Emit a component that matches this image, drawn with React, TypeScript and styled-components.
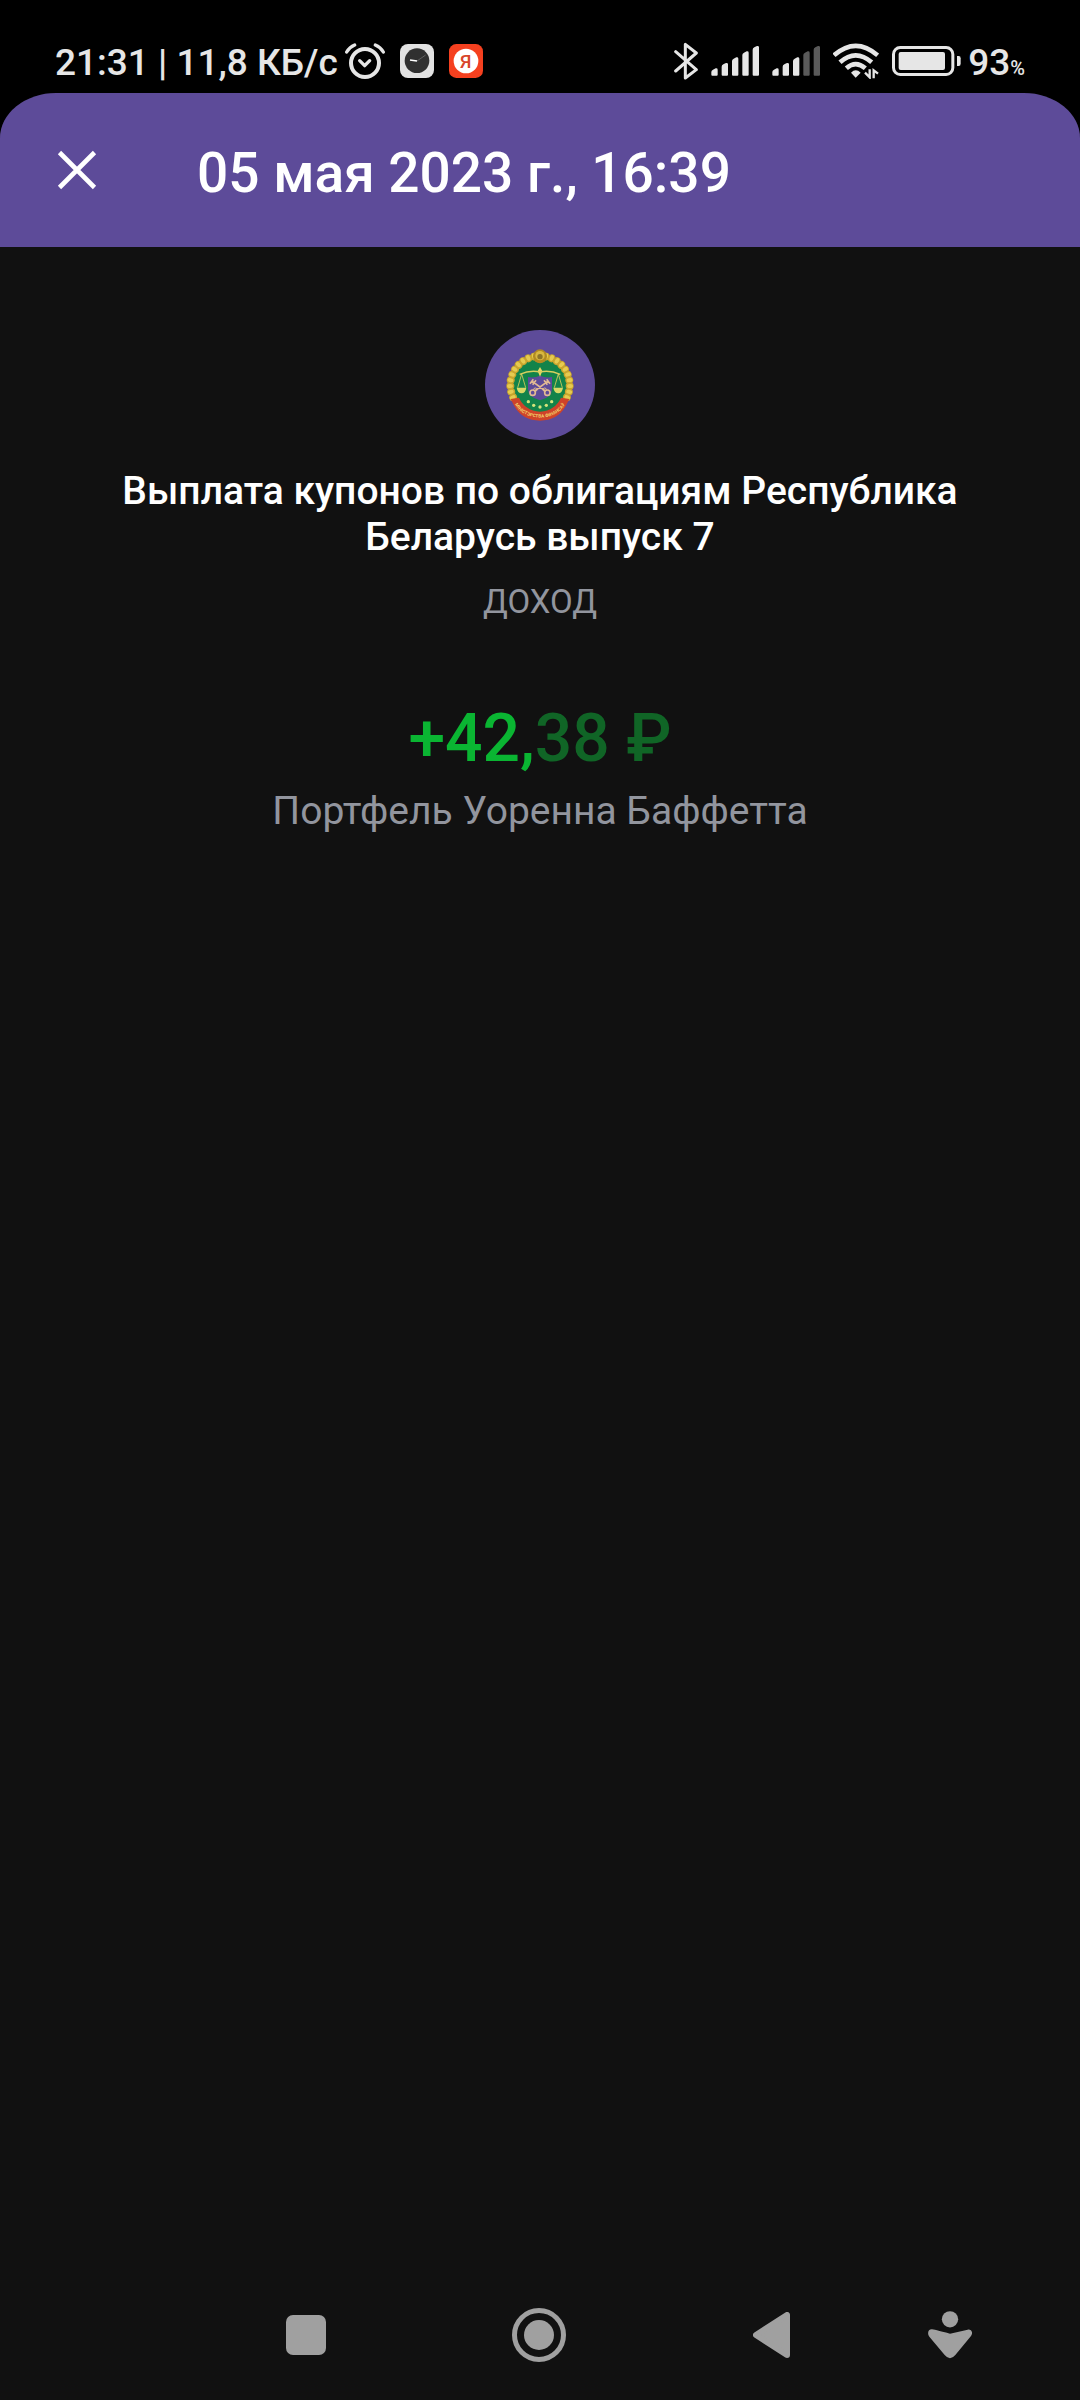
import React from "react";
import styled, { createGlobalStyle } from "styled-components";

const LIGHT = "#e6e6e6";
const GREY = "#a0a0a0";

export default function App() {
  return (
    <Page>
      <GlobalStyle />
      <StatusBar />
      <Screen>
        <Header>
          <IconButton aria-label="Закрыть">
            <svg width="40" height="40" viewBox="0 0 40 40">
              <path d="M2.5 2.5 37.5 37.5M37.5 2.5 2.5 37.5" stroke="#fff" strokeWidth="4.6" />
            </svg>
          </IconButton>
          <HeaderTitle>05 мая 2023 г., 16:39</HeaderTitle>
        </Header>
        <Content>
          <Emblem />
          <OperationTitle>
            Выплата купонов по облигациям Республика Беларусь выпуск 7
          </OperationTitle>
          <OperationType>ДОХОД</OperationType>
          <Amount>
            +42,<Fraction>38 ₽</Fraction>
          </Amount>
          <Portfolio>Портфель Уоренна Баффетта</Portfolio>
        </Content>
        <NavigationBar />
      </Screen>
    </Page>
  );
}

function StatusBar() {
  return (
    <StatusContainer>
      <StatusGroup>
        <StatusText>21:31 | 11,8 КБ/с</StatusText>
        <StatusIcons $gap={15}>
          <AlarmIcon />
          <ClockAppIcon />
          <YandexIcon />
        </StatusIcons>
      </StatusGroup>
      <StatusGroup>
        <StatusIcons $gap={13}>
          <BluetoothIcon />
          <SignalIcon level={5} />
          <SignalIcon level={3} />
          <WifiIcon />
          <BatteryIcon />
        </StatusIcons>
        <StatusText>
          93<Percent>%</Percent>
        </StatusText>
      </StatusGroup>
    </StatusContainer>
  );
}

function AlarmIcon() {
  return (
    <svg width="40" height="36" viewBox="38 64 120 108" fill="none" stroke={LIGHT} strokeLinecap="round">
      <circle cx="98" cy="124" r="42" strokeWidth="12" />
      <path d="M43 91Q52 76 67 70M129 70Q144 76 153 91" strokeWidth="10" />
      <path d="M82 117 97 132 112 117" strokeWidth="10" strokeLinejoin="round" />
    </svg>
  );
}

function ClockAppIcon() {
  return (
    <svg width="34" height="34" viewBox="0 0 102 102">
      <rect width="102" height="102" rx="24" fill="#e2e2e2" />
      <circle cx="51" cy="50" r="37" fill="#303030" />
      <path d="M51 51 77 33" stroke="#777" strokeWidth="2" />
      <path d="M30 48 51 51" stroke="#fff" strokeWidth="4" />
    </svg>
  );
}

function YandexIcon() {
  return (
    <svg width="34" height="34" viewBox="0 0 102 102">
      <rect width="102" height="102" rx="22" fill="#f5401f" />
      <circle cx="51" cy="51" r="37" fill="#fff" />
      <text x="50" y="71" textAnchor="middle" fontSize="56" fontWeight="500" fill="#d8452a">
        Я
      </text>
    </svg>
  );
}

function BluetoothIcon() {
  return (
    <svg width="24" height="38" viewBox="64 62 72 114" fill="none" stroke={LIGHT} strokeWidth="9">
      <path
        d="M69 91 131 145 98 170V69L131 95 69 149"
        strokeLinecap="round"
        strokeLinejoin="round"
      />
    </svg>
  );
}

function SignalIcon({ level }: { level: number }) {
  const tops = [70, 54, 37, 19, 3];
  return (
    <svg width="48" height="31" viewBox="0 0 144 93">
      {tops.map((top, key) => (
        <path
          key={key}
          d={`M${1 + key * 31} ${top + 11}Q${1 + key * 31} ${top + 6} ${6 + key * 31} ${top + 4}L${14 + key * 31} ${top}Q${20 + key * 31} ${top - 1} ${20 + key * 31} ${top + 4}V89Q${20 + key * 31} 92 ${17 + key * 31} 92H${4 + key * 31}Q${1 + key * 31} 92 ${1 + key * 31} 89Z`}
          fill={key < level ? LIGHT : "#5a5a5a"}
        />
      ))}
    </svg>
  );
}

function WifiIcon() {
  return (
    <svg width="46" height="36" viewBox="540 68 138 108" fill="none" stroke={LIGHT}>
      <path d="M543 105Q608 48 674 105" strokeWidth="14" />
      <path d="M561 126Q608 84 656 126" strokeWidth="14" />
      <path d="M580 144Q608 119 637 144" strokeWidth="14" />
      <path d="M594 157Q608 143 623 157L608 172Z" fill={LIGHT} stroke="none" />
      <path d="M650 147V171L636 157M662 174V150L675 160" strokeWidth="7" />
    </svg>
  );
}

function BatteryIcon() {
  return (
    <svg width="69" height="30" viewBox="0 0 207 90">
      <rect x="4.5" y="4.5" width="178" height="81" rx="20" fill="none" stroke={LIGHT} strokeWidth="9" />
      <rect x="20" y="18" width="139" height="54" rx="6" fill={LIGHT} />
      <path d="M195 30H200Q206 30 206 37V53Q206 60 200 60H195Z" fill={LIGHT} />
    </svg>
  );
}

function Emblem() {
  const leaves = Array.from({ length: 21 }, (_, i) => 155 + i * 11.5);
  return (
    <svg width="110" height="110" viewBox="45 45 330 330" role="img" aria-label="Міністэрства фінансаў">
      <defs>
        <path id="ribbonLine" d="M127 256Q152 307 210 308Q268 307 293 256" />
      </defs>
      <circle cx="210" cy="210" r="165" fill="#5d4b99" />
      <circle cx="210" cy="212" r="94" fill="#12834a" />
      {leaves.map((angle) => {
        const rad = (angle * Math.PI) / 180;
        const x = 210 + 89 * Math.cos(rad);
        const y = 210 + 87 * Math.sin(rad);
        return (
          <g key={angle} transform={`translate(${x} ${y}) rotate(${angle})`}>
            <ellipse rx="12" ry="11" fill="#c9a52d" />
            <ellipse cx="1" rx="9" ry="6" fill="#e6cb50" />
          </g>
        );
      })}
      <circle cx="210" cy="124" r="21" fill="#b08a22" />
      <circle cx="210" cy="122" r="14" fill="#d9b840" />
      <circle cx="210" cy="125" r="8" fill="#8b7428" />
      <path d="M174 186Q192 190 210 182Q228 190 246 186V222Q246 247 210 256Q174 247 174 222Z" fill="#5d4b99" />
      <path d="M210 156 217 168 210 185 203 168Z" fill="#ead864" />
      <g fill="none" stroke="#d8cf5e" strokeWidth="4">
        <path d="M149 178Q181 164 210 171Q239 164 271 178" />
        <path d="M155 177 143 218M155 177 167 218M265 177 253 218M265 177 277 218" strokeWidth="2.5" />
      </g>
      <path d="M140 218H169Q166 235 155 235Q143 235 140 218ZM250 218H279Q276 235 265 235Q253 235 250 218Z" fill="#d8d966" />
      <g fill="none" stroke="#e2ba93" strokeWidth="5">
        <path d="M184 197 226 228M236 197 194 228M180 206 190 193M188 209 198 196M240 206 230 193M232 209 222 196" />
        <circle cx="188" cy="233" r="8" />
        <circle cx="232" cy="233" r="8" />
        <circle cx="196" cy="224" r="5" strokeWidth="3" />
        <circle cx="224" cy="224" r="5" strokeWidth="3" />
      </g>
      <g fill="#d5e37b">
        <circle cx="175" cy="260" r="5" />
        <circle cx="191" cy="271" r="5" />
        <circle cx="210" cy="276" r="5" />
        <circle cx="229" cy="271" r="5" />
        <circle cx="245" cy="260" r="5" />
      </g>
      <path d="M122 252 147 248Q164 286 210 290Q256 286 273 248L298 252 287 274Q262 317 210 317Q158 317 133 274Z" fill="#cf4329" />
      <RibbonText>
        <textPath href="#ribbonLine" startOffset="50%" textAnchor="middle">
          МІНІСТЭРСТВА ФІНАНСАЎ
        </textPath>
      </RibbonText>
    </svg>
  );
}

function NavigationBar() {
  return (
    <Nav>
      <NavButton aria-label="Недавние">
        <svg width="40" height="40" viewBox="0 0 40 40">
          <rect width="40" height="40" rx="7" fill={GREY} />
        </svg>
      </NavButton>
      <NavButton aria-label="Домой">
        <svg width="54" height="54" viewBox="0 0 54 54">
          <circle cx="27" cy="27" r="24.5" fill="none" stroke={GREY} strokeWidth="5" />
          <circle cx="27" cy="27" r="15" fill={GREY} />
        </svg>
      </NavButton>
      <NavButton aria-label="Назад">
        <svg width="38" height="46" viewBox="0 0 38 46">
          <path
            d="M34 3V43L3 23Z"
            fill={GREY}
            stroke={GREY}
            strokeWidth="6"
            strokeLinejoin="round"
          />
        </svg>
      </NavButton>
      <NavButton aria-label="Специальные возможности">
        <svg width="44" height="48" viewBox="622 92 132 144">
          <circle cx="688" cy="117" r="24.5" fill={GREY} />
          <path
            d="M634 147Q637 147 688 160L741 148C753 146 758 158 751 167L704 224Q688 243 672 224L626 169C618 158 624 146 634 147Z"
            fill={GREY}
          />
        </svg>
      </NavButton>
    </Nav>
  );
}

const GlobalStyle = createGlobalStyle`
  * {
    box-sizing: border-box;
  }

  body {
    margin: 0;
    background-color: #000;
    font-family: Roboto, "Noto Sans", sans-serif;
  }
`;

const Page = styled.div`
  display: flex;
  flex-flow: column nowrap;
  min-height: 100vh;
`;

const StatusContainer = styled.div`
  display: flex;
  justify-content: space-between;
  align-items: center;
  height: 93px;
  padding: 28px 55px 0;
`;

const StatusGroup = styled.div`
  display: flex;
  align-items: center;
  gap: 7px;
`;

const StatusIcons = styled.div<{ $gap: number }>`
  display: flex;
  align-items: center;
  gap: ${(props) => props.$gap}px;
`;

const StatusText = styled.span`
  padding-top: 4px;
  color: ${LIGHT};
  font-size: 37px;
  font-weight: 500;
  line-height: 44px;
  white-space: nowrap;
`;

const Percent = styled.span`
  font-size: 20px;
  line-height: 20px;
`;

const Screen = styled.div`
  display: flex;
  flex-flow: column nowrap;
  flex: 1;
  background-color: #111;
  border-radius: 56px 56px 0 0 / 45px 45px 0 0;
  overflow: hidden;
`;

const Header = styled.header`
  display: flex;
  align-items: center;
  gap: 100px;
  height: 154px;
  padding: 0 57px;
  background-color: #5d4b99;
`;

const IconButton = styled.button`
  display: flex;
  padding: 0;
  border: none;
  background: none;
`;

const HeaderTitle = styled.h1`
  margin: 0;
  padding-top: 6px;
  color: #fff;
  font-size: 55px;
  font-weight: 500;
  line-height: 64px;
`;

const Content = styled.main`
  display: flex;
  flex-flow: column nowrap;
  align-items: center;
  flex: 1;
  padding: 83px 88px 0;
  text-align: center;
`;

const OperationTitle = styled.h2`
  margin: 28px 0 0;
  color: #fff;
  font-size: 39px;
  font-weight: 500;
  line-height: 46px;
`;

const OperationType = styled.p`
  margin: 19px 0 0;
  color: #92959e;
  font-size: 33px;
  line-height: 46px;
`;

const Amount = styled.div`
  margin-top: 75px;
  color: #0ab532;
  font-size: 66px;
  font-weight: 500;
  line-height: 78px;
`;

const Fraction = styled.span`
  color: #106526;
`;

const Portfolio = styled.p`
  margin: 10px 0 0;
  color: #92959e;
  font-size: 39px;
  line-height: 46px;
`;

const RibbonText = styled.text`
  fill: #f2d26a;
  font-size: 14px;
  font-weight: 700;
`;

const Nav = styled.nav`
  display: grid;
  grid-template-columns: 233fr 233fr 233fr 123fr;
  align-items: center;
  height: 130px;
  padding: 0 69px 0 189px;
`;

const NavButton = styled.button`
  display: flex;
  justify-content: center;
  padding: 0;
  border: none;
  background: none;
`;
